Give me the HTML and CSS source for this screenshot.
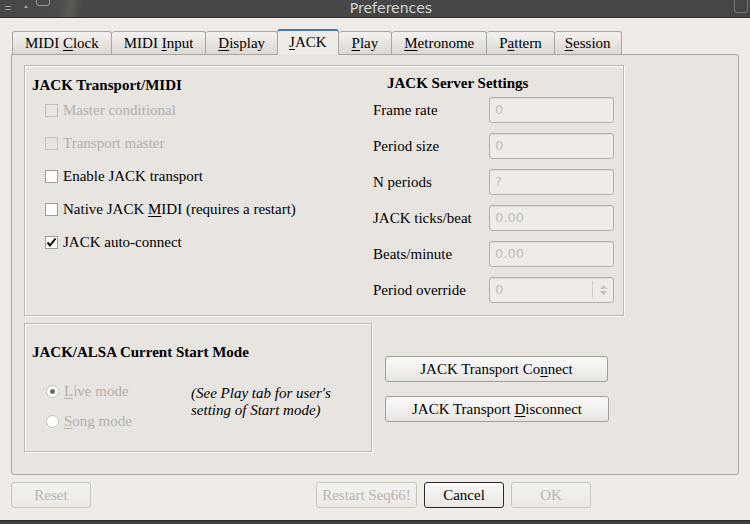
FILE: index.html
```html
<!DOCTYPE html>
<html>
<head>
<meta charset="utf-8">
<link rel="stylesheet" href="styles.css">
</head>
<body>
<div class="window">
  <div class="titlebar">
    <div class="tb-left">
      <span class="tb-menu"></span>
      <span class="tb-up"></span>
      <span class="tb-box"></span>
    </div>
    <div class="tb-title">Preferences</div>
    <span class="tb-rbox"></span>
  </div>
  <div class="dialog">
    <div class="tabs">
      <div class="tab">MIDI <u>C</u>lock</div>
      <div class="tab">MIDI <u>I</u>nput</div>
      <div class="tab"><u>D</u>isplay</div>
      <div class="tab active"><u>J</u>ACK</div>
      <div class="tab play"><u>P</u>lay</div>
      <div class="tab"><u>M</u>etronome</div>
      <div class="tab">P<u>a</u>ttern</div>
      <div class="tab session"><u>S</u>ession</div>
    </div>
    <div class="pane">
      <div class="group g1">
        <div class="col-left">
          <div class="gtitle">JACK Transport/MIDI</div>
          <div class="check disabled"><span class="box"></span><span>Master conditional</span></div>
          <div class="check disabled"><span class="box"></span><span>Transport master</span></div>
          <div class="check"><span class="box"></span><span>Enable JACK transport</span></div>
          <div class="check"><span class="box"></span><span>Native JACK <u>M</u>IDI (requires a restart)</span></div>
          <div class="check"><span class="box"><svg width="11" height="11" viewBox="0 0 11 11"><path d="M1.5 5.5 L4 8.5 L9.5 1.5" fill="none" stroke="#000" stroke-width="2"/></svg></span><span>JACK auto-connect</span></div>
        </div>
        <div class="col-right">
          <div class="gtitle rtitle">JACK Server Settings</div>
          <div class="field"><span class="flabel">Frame rate</span><span class="input">0</span></div>
          <div class="field"><span class="flabel">Period size</span><span class="input">0</span></div>
          <div class="field"><span class="flabel">N periods</span><span class="input">?</span></div>
          <div class="field"><span class="flabel">JACK ticks/beat</span><span class="input">0.00</span></div>
          <div class="field"><span class="flabel">Beats/minute</span><span class="input">0.00</span></div>
          <div class="field"><span class="flabel">Period override</span><span class="input spin"><span class="spin-val">0</span><span class="spin-btns"><svg width="9" height="12" viewBox="0 0 9 12"><path d="M1 5 L4.5 1 L8 5 Z M1 7 L4.5 11 L8 7 Z" fill="#c4c0bc"/></svg></span></span></div>
        </div>
      </div>
      <div class="lower">
        <div class="group g2">
          <div class="gtitle">JACK/ALSA Current Start Mode</div>
          <div class="modes">
            <div class="radios">
              <div class="radio disabled"><span class="rb on"></span><span><u>L</u>ive mode</span></div>
              <div class="radio disabled"><span class="rb"></span><span><u>S</u>ong mode</span></div>
            </div>
            <div class="note">(See Play tab for user's<br>setting of Start mode)</div>
          </div>
        </div>
        <div class="transport">
          <div class="btn wide"><span>JACK Transport Co<u>n</u>nect</span></div>
          <div class="btn wide"><span>JACK Transport <u>D</u>isconnect</span></div>
        </div>
      </div>
    </div>
    <div class="buttons">
      <div class="btn bottom disabled">Reset</div>
      <div class="spacer"></div>
      <div class="btn bottom restart disabled">Restart Seq66!</div>
      <div class="btn bottom focus">Cancel</div>
      <div class="btn bottom disabled">OK</div>
    </div>
  </div>
  <div class="bottombar"></div>
</div>
</body>
</html>
```
FILE: styles.css
```css
* { box-sizing: border-box; }
html, body { margin: 0; padding: 0; }
body {
  width: 750px;
  height: 524px;
  overflow: hidden;
  font-family: "Liberation Serif", "Times New Roman", serif;
  font-size: 15px;
  color: #000;
  background: #efece8;
}
u { text-decoration: underline; text-underline-offset: 2px; }
.window { width: 750px; height: 524px; display: flex; flex-direction: column; }

.titlebar {
  height: 18px;
  background: linear-gradient(100deg, #474747 0%, #4a4a4a 8%, #5a5a55 9.5%, #474747 11%, #454545 100%);
  border-bottom: 1px solid #2e2e2e;
  position: relative;
  display: flex;
  align-items: center;
  justify-content: center;
  flex: none;
}
.tb-left { position: absolute; left: 0; top: 0; height: 17px; width: 60px; }
.tb-menu { position: absolute; left: 5px; top: 6px; width: 6px; height: 4px; border-top: 1px solid #9a9a9a; border-bottom: 1px solid #9a9a9a; }
.tb-up { position: absolute; left: 24px; top: 5px; width: 0; height: 0; border-left: 2px solid transparent; border-right: 2px solid transparent; border-bottom: 3px solid #aaa; }
.tb-box { position: absolute; left: 36px; top: -6px; width: 14px; height: 12px; border: 1px solid #9a9a9a; border-radius: 3px; }
.tb-rbox { position: absolute; right: 2px; top: -4px; width: 14px; height: 17px; border: 1px solid #777; border-radius: 3px; }
.tb-title {
  font-family: "DejaVu Sans", sans-serif;
  font-size: 14px;
  color: #d6d6d6;
  margin-left: 32px;
  line-height: 17px;
}

.dialog {
  flex: 1;
  display: flex;
  flex-direction: column;
  padding: 11px 11px 0 11px;
  background: #efece8;
}

.tabs { display: flex; align-items: flex-end; height: 25px; padding-left: 1px; position: relative; z-index: 1; }
.tab {
  height: 23px;
  padding: 0 12px;
  border: 1px solid #a9a5a0;
  border-bottom: none;
  border-left: none;
  border-radius: 3px 3px 0 0;
  background: linear-gradient(#f4f2f0, #dcd8d3);
  line-height: 22px;
  white-space: nowrap;
}
.tab.play { padding: 0 13px; }
.tab.session { padding: 0 10px; }
.tab:first-child { border-left: 1px solid #a9a5a0; }
.tab.active {
  height: 26px;
  background: #efece8;
  border-top: 2px solid #3b7dc4;
  border-left: 1px solid #a9a5a0;
  margin-left: -1px;
  margin-bottom: -1px;
  line-height: 23px;
  padding: 0 11px 0 11px;
}

.pane {
  height: 421px;
  border: 1px solid #a9a5a0;
  border-radius: 0 3px 3px 3px;
  background: #e8e4e0;
  padding: 10px 12px 0 12px;
  display: flex;
  flex-direction: column;
}

.group {
  border: 1px solid #bcb8b3;
  box-shadow: inset 1px 1px 0 #fbfaf9, 1px 1px 0 #fbfaf9;
}
.g1 {
  width: 600px;
  height: 251px;
  display: flex;
  padding: 9px 0 0 7px;
}
.col-left { width: 341px; }
.gtitle { font-weight: bold; height: 18px; line-height: 18px; }
.col-left .gtitle { margin-top: 1px; }
.check {
  height: 33px;
  display: flex;
  align-items: center;
  padding-left: 13px;
  white-space: nowrap;
}
.box {
  width: 13px;
  height: 13px;
  border: 1px solid #9f9b96;
  background: #fff;
  margin-right: 5px;
  display: flex;
  align-items: center;
  justify-content: center;
  flex: none;
}
.check.disabled { color: #b5b1ad; }
.check.disabled .box { background: #e8e4e0; border-color: #c4c0bb; }

.col-right { width: 245px; }
.rtitle { margin-left: 14px; margin-top: -1px; }
.field {
  height: 36px;
  display: flex;
  align-items: center;
}
.flabel { width: 116px; }
.input {
  width: 125px;
  height: 26px;
  border: 1px solid #b3afaa;
  border-radius: 3px;
  background: #efece8;
  color: #c0bcb8;
  padding-left: 5px;
  line-height: 24px;
  font-family: "DejaVu Sans", sans-serif;
  font-size: 13px;
  box-shadow: inset 0 1px 0 #e2ded9;
}
.spin { display: flex; padding-left: 0; }
.spin-val { flex: 1; padding-left: 5px; }
.spin-btns {
  width: 21px;
  border-left: 1px solid #d2cec9;
  margin: 3px 0;
  display: flex;
  align-items: center;
  justify-content: center;
}

.lower { display: flex; margin-top: 7px; }
.g2 {
  width: 348px;
  height: 129px;
  padding: 19px 0 0 7px;
}
.modes { display: flex; margin-top: 15px; }
.radios { width: 159px; }
.radio {
  height: 30px;
  display: flex;
  align-items: center;
  padding-left: 14px;
  line-height: 18px;
}
.radio.disabled { color: #b5b1ad; }
.rb {
  width: 13px;
  height: 13px;
  border: 1px solid #c4c0bb;
  border-radius: 50%;
  background: #fdfdfc;
  margin-right: 5px;
  position: relative;
  flex: none;
}
.rb.on::after {
  content: "";
  position: absolute;
  left: 3px; top: 3px;
  width: 5px; height: 5px;
  border-radius: 50%;
  background: #6e6e6e;
}
.note {
  font-style: italic;
  line-height: 17px;
  margin-top: 9px;
}

.transport {
  margin-left: 13px;
  margin-top: 33px;
  display: flex;
  flex-direction: column;
  gap: 14px;
}
.btn {
  height: 26px;
  border: 1px solid #a29e99;
  border-radius: 3px;
  background: linear-gradient(#fbfaf9, #e9e6e2);
  display: flex;
  align-items: center;
  justify-content: center;
  white-space: nowrap;
}
.btn.wide { width: 223px; }
.btn.wide + .btn.wide { width: 224px; }

.buttons { display: flex; margin-top: 7px; gap: 7px; }
.btn.bottom { width: 80px; }
.btn.restart { width: 101px; }
.spacer { flex: 1; }
.btn.disabled {
  color: #bab6b2;
  border-color: #c9c5c0;
  background: linear-gradient(#f4f2f0, #ebe8e4);
}
.btn.focus { border-color: #2a2a2a; }
.buttons .btn:last-child { margin-right: 148px; }

.bottombar { height: 4px; background: #3f3f3f; border-top: 1px solid #2a2a2a; flex: none; }
```
